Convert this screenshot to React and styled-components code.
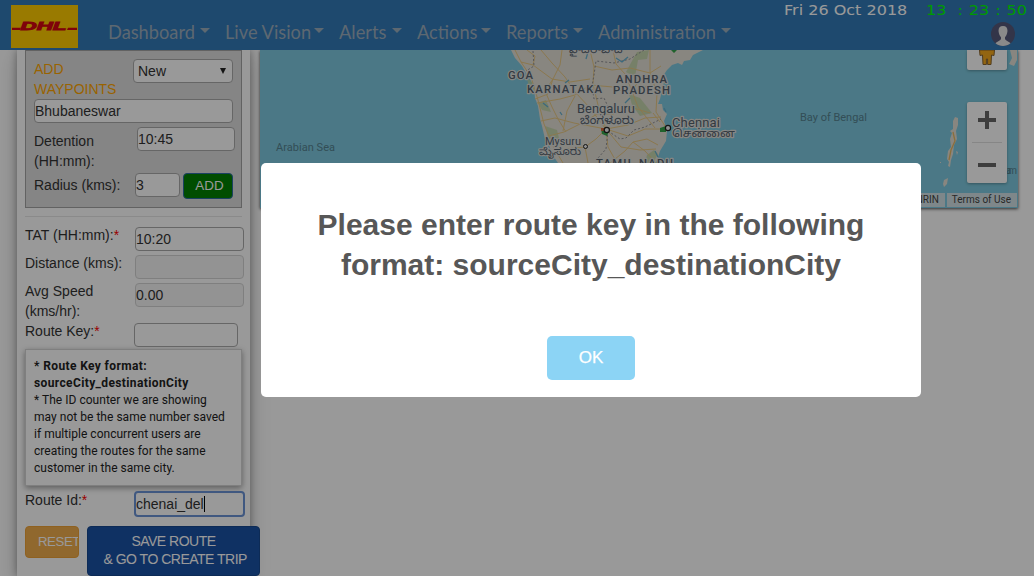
import React from "react";
import styled, { createGlobalStyle } from "styled-components";

const Global = createGlobalStyle`
  * { box-sizing: border-box; }
  html, body { margin: 0; height: 576px; overflow: hidden; background: #fff; }
  body { font: 14px/20px "Liberation Sans", Arial, sans-serif; color: #333; }
  input, select, button { font-family: inherit; }
`;

const Page = styled.div`
  width: 1034px;
  height: 576px;
  overflow: hidden;
  display: flex;
  flex-direction: column;
`;

const NavBar = styled.header`
  position: relative;
  z-index: 2;
  flex: 0 0 50px;
  background: #337ab7;
  display: flex;
  padding: 5px 7px 0 11px;
`;

const Logo = styled.svg`
  flex: none;
  width: 67px;
  height: 43px;
`;

const Menu = styled.nav`
  display: flex;
  gap: 15px;
  margin: 14px 0 0 30px;
`;

const MenuItem = styled.a`
  flex: none;
  display: flex;
  align-items: center;
  height: 26px;
  width: ${(p) => p.$width}px;
  font: 18.25px/26px Lato, sans-serif;
  color: #9badbd;
  white-space: nowrap;
  &::after {
    content: "";
    margin: -4px 0 0 auto;
    border: 5.5px solid transparent;
    border-top-color: currentColor;
    border-bottom: 0;
  }
`;

const Status = styled.div`
  margin-left: auto;
  display: flex;
  flex-direction: column;
  align-items: flex-end;
`;

const Clock = styled.div`
  display: flex;
  gap: 19px;
  margin-top: -3px;
  font: 14px/16px "DejaVu Sans", sans-serif;
  white-space: pre;
`;

const DateText = styled.span`
  width: 123px;
  color: #fff;
  transform: scaleX(1.145);
  transform-origin: left;
`;

const TimeText = styled.span`
  width: 88px;
  margin-right: 13px;
  display: flex;
  justify-content: space-between;
  color: #0f0;
  transform: scaleX(1.148);
  transform-origin: left;
`;

const Avatar = styled.svg`
  width: 24px;
  height: 24px;
  margin: 4px 12px 0 0;
`;

const Content = styled.main`
  flex: 1;
  display: flex;
  min-height: 0;
`;

const SidePanel = styled.section`
  flex: none;
  width: 233px;
  height: 526px;
  margin-left: 17px;
  padding: 0 6px 0 8px;
  box-shadow: 0 0 8px rgba(0, 0, 0, 0.35), 0 6px 20px rgba(0, 0, 0, 0.19);
`;

const Waypoints = styled.div`
  width: 217px;
  height: 158px;
  padding: 8px 0 0 8px;
  background: #dedede;
  border: 1px solid #a4a4a4;
`;

const FieldRow = styled.div`
  display: flex;
  align-items: flex-start;
  height: ${(p) => p.$height}px;
  padding-top: ${(p) => p.$top || 0}px;
`;

const Label = styled.label`
  flex: none;
  width: ${(p) => p.$width}px;
  padding-top: ${(p) => p.$top || 0}px;
  color: ${(p) => (p.$accent ? "#ffa500" : "#333")};
`;

const Required = styled.span`
  color: #f00;
`;

const Input = styled.input`
  flex: none;
  width: ${(p) => p.$width}px;
  height: 24px;
  margin-top: ${(p) => p.$top || 0}px;
  padding: 0 1px 0 0;
  border: 1px solid #aaa;
  border-radius: 4px;
  background: #fff;
  color: #333;
  font-size: 14px;
  &:disabled { background: #f5f5f5; border-color: #d4d4d4; color: #333; }
`;

const FocusedField = styled.div`
  flex: none;
  width: 111px;
  height: 26px;
  margin-top: 1px;
  padding: 1px 0;
  line-height: 23px;
  border: 2px solid #6b93d6;
  border-radius: 4px;
  display: flex;
  align-items: center;
`;

const Caret = styled.i`
  width: 1px;
  height: 16px;
  background: #000;
`;

const SelectBox = styled.div`
  width: 100px;
  height: 24px;
  padding: 0 6px 0 4px;
  display: flex;
  justify-content: space-between;
  align-items: center;
  border: 1px solid #aaa;
  border-radius: 4px;
  background: #fff;
  &::after {
    content: "";
    border: 3.5px solid transparent;
    border-top: 6px solid #222;
    border-bottom: 0;
  }
`;

const AddButton = styled.button`
  width: 50px;
  height: 26px;
  margin-left: 3px;
  padding: 0 0 2px 3px;
  border: 1px solid #2e6da4;
  border-radius: 4px;
  background: #008000;
  color: #fff;
  font-size: 13.4px;
`;

const Divider = styled.hr`
  width: 217px;
  margin: 8px 0;
  border: 0;
  border-top: 1px solid #e6e6e6;
`;

const HintCard = styled.div`
  width: 217px;
  height: 137px;
  padding: 8px;
  border: 1px solid #d4d4d4;
  box-shadow: 0 2px 6px rgba(0, 0, 0, 0.4);
  font: 12px/17px Roboto, sans-serif;
  letter-spacing: 0.03px;
  color: #222;
  white-space: nowrap;
  b { letter-spacing: 0.38px; }
`;

const Actions = styled.div`
  display: flex;
  align-items: flex-start;
  gap: 8px;
  width: 235px;
`;

const ResetButton = styled.button`
  width: 54px;
  height: 32px;
  padding: 0 0 2px 12px;
  border: 1px solid #eea236;
  border-radius: 4px;
  background: #f0ad4e;
  color: #fff;
  font-size: 13.2px;
  letter-spacing: -0.4px;
  text-align: left;
  overflow: hidden;
`;

const SaveButton = styled.button`
  position: relative;
  z-index: 1;
  width: 173px;
  height: 50px;
  padding: 0 0 2px;
  border: 1px solid #17498f;
  border-radius: 4px;
  background: #1a52a5;
  color: #fff;
  font-size: 14px;
  letter-spacing: -0.5px;
  line-height: 18px;
  white-space: pre;
`;

const MapFrame = styled.section`
  flex: none;
  position: relative;
  width: 758px;
  height: 158px;
  margin-left: 10px;
  background: #7dc9df;
  box-shadow: 0 1px 3px rgba(0, 0, 0, 0.7);
`;

const MapDrawing = styled.svg`
  display: block;
  width: 758px;
  height: 158px;
`;

const MapControls = styled.div`
  position: absolute;
  top: 0;
  right: 11px;
  width: 40px;
`;

const PegmanBox = styled.div`
  height: 20px;
  display: flex;
  justify-content: center;
  background: #fff;
  border-radius: 0 0 2px 2px;
  box-shadow: 0 1px 3px rgba(0, 0, 0, 0.3);
`;

const ZoomBox = styled.div`
  height: 81px;
  margin-top: 32px;
  background: #fff;
  border-radius: 2px;
  box-shadow: 0 1px 3px rgba(0, 0, 0, 0.3);
`;

const Legal = styled.div`
  position: absolute;
  right: 1px;
  bottom: 1px;
  display: flex;
  gap: 2px;
  font: 10px/14px Roboto, sans-serif;
  color: #444;
`;

const LegalItem = styled.span`
  padding: 0 6px 0 5px;
  white-space: nowrap;
  background: #d2e1e6;
`;

const Overlay = styled.div`
  position: fixed;
  z-index: 10;
  inset: 0;
  display: flex;
  align-items: flex-start;
  padding: 163px 0 0 261px;
  background: rgba(0, 0, 0, 0.4);
`;

const Dialog = styled.div`
  width: 660px;
  height: 234px;
  padding-top: 42px;
  display: flex;
  flex-direction: column;
  align-items: center;
  background: #fff;
  border-radius: 5px;
`;

const DialogTitle = styled.h2`
  margin: 0 0 51px;
  font-size: 30px;
  line-height: 40px;
  font-weight: 700;
  color: #575757;
  text-align: center;
`;

const OkButton = styled.button`
  width: 88px;
  height: 44px;
  border: 0;
  border-radius: 5px;
  background: #8cd4f5;
  color: #fff;
  font-size: 17px;
  padding: 0 0 1px;
  -webkit-text-stroke: 0.25px #fff;
`;

const menu = [
  ["Dashboard", 102],
  ["Live Vision", 99],
  ["Alerts", 63],
  ["Actions", 74],
  ["Reports", 77],
  ["Administration", 133],
];

const roads = [
  "M515 50 L521 62 L531 77 L538 100 L544 124 L554 148 L563 163",
  "M527 50 L535 56 L533 65 L521 62 M533 65 L552 79 L570 82 L590 79",
  "M541 50 L552 63 L565 77 L575 92 L590 108 L605 128",
  "M562 50 L560 65 L553 79 L548 94 L535 99",
  "M590 50 L594 67 L593 84 L598 105 L606 129 L608 147 L617 163",
  "M594 66 L612 70 L630 68 L650 73 L661 66",
  "M613 50 L616 64 L625 74 L632 91 L638 107 L655 128",
  "M650 50 L650 73 L657 93 L656 112 L667 129",
  "M537 103 L560 99 L575 95 L590 85 L613 87 L628 94 L648 86",
  "M541 121 L555 118 L574 123 L606 129 L628 125 L645 118 L661 117",
  "M545 137 L564 132 L584 122 L597 114 L613 114 L630 107 L650 113",
  "M555 155 L565 149 L585 147 L596 139 L606 129 L628 136 L645 129 L667 129",
  "M585 147 L588 163 M606 129 L621 147 L640 150 L656 149",
  "M610 163 L625 151 L633 142 L645 151 L656 163",
  "M658 145 L647 139 L633 142 M575 96 L567 111 L563 131",
  "M553 79 L545 91 L552 107 L558 119 L566 132",
  "M650 74 L638 82 L632 91 M653 113 L660 122",
];

function PlaceLabels() {
  const halo = {
    stroke: "#dfdfdb",
    strokeWidth: 2.4,
    strokeLinejoin: "round",
    paintOrder: "stroke",
    fill: "#56626d",
  };
  const indic = '"Noto Sans Kannada", "Noto Sans Tamil", "Noto Sans", sans-serif';
  return (
    <g fontFamily="Roboto, sans-serif" {...halo}>
      <g fontWeight="500" fontSize="11.3">
        <text x="508" y="79" textLength="25">GOA</text>
        <text x="527" y="93" textLength="75">KARNATAKA</text>
        <text x="616" y="83" textLength="51">ANDHRA</text>
        <text x="613" y="94" textLength="57">PRADESH</text>
        <text x="596" y="167" textLength="77">TAMIL NADU</text>
      </g>
      <text x="577" y="113" fontSize="13" textLength="58">Bengaluru</text>
      <text x="672" y="127" fontSize="13" textLength="48">Chennai</text>
      <text x="545" y="145" fontSize="11" textLength="36">Mysuru</text>
      <g fontFamily={indic}>
        <text x="580" y="124" fontSize="11" textLength="54" lengthAdjust="spacingAndGlyphs">ಬೆಂಗಳೂರು</text>
        <text x="672" y="137" fontSize="11" textLength="63" lengthAdjust="spacingAndGlyphs">சென்னை</text>
        <text x="539" y="155" fontSize="10" textLength="42" lengthAdjust="spacingAndGlyphs">ಮೈಸೂರು</text>
        <text x="569" y="53" fontSize="11" textLength="54" lengthAdjust="spacingAndGlyphs">హైదరాబాద్</text>
      </g>
    </g>
  );
}

function RegionMap() {
  return (
    <MapDrawing viewBox="260 50 758 158">
      <path
        fill="#e3dfd5"
        d="M511 50 L515 58 L522 66 L526 73 L531 81 L534 88 L535 98 L538 106 L540 119 L542 126 L545 139 L549 145 L552 154 L558 163 L560 208 L655 208 L656 163 L660 151 L666 141 L667 131 L664 121 L667 114 L663 110 L662 104 L658 104 L660 99 L662 91 L664 82 L663 76 L667 70 L672 65 L678 63 L682 65 L684 61 L690 60 L693 55 L703 50 Z"
      />
      <g fill="#bcd3a2" opacity=".75">
        <path d="M637 52 L649 50 L647 59 L638 60 L635 77 L626 72 L632 61Z" />
        <path d="M629 94 L640 98 L652 113 L640 116 L632 105Z" />
        <path d="M527 78 L534 84 L535 92 L529 88Z M538 103 L546 100 L551 112 L542 110Z M545 126 L557 130 L560 142 L549 141Z" />
        <path d="M647 155 L654 150 L658 154 L653 163 L645 163Z" />
      </g>
      <g fill="none" stroke="#e8c883" strokeWidth="1">
        {roads.map((d) => <path key={d} d={d} />)}
      </g>
      <g fill="none" stroke="#8f8f94" strokeWidth="1" strokeDasharray="2 2">
        <path d="M533 51 L534 66 L526 71 M644 50 L630 59 L614 63 L596 61 L594 75 L592 86 L594 99 L604 98 L611 113" />
        <path d="M608 131 L620 139 L626 138 L634 130 L645 127 L661 119 M608 131 L606 149 L598 158" />
      </g>
      <g fill="none" stroke="#66b0cf" strokeWidth="1.3">
        <path d="M616 58 L622 62 L628 57 M543 103 L548 107 M560 112 L562 115 M565 83 L569 80 M625 103 L630 98 M586 59 L588 52" />
        <path d="M664 108 L666 112 M655 151 L658 157" />
      </g>
      <path d="M671 50 L677 50 L674 53Z M660 128 L666 126 L666 132 L660 132Z M601 129 L610 129 L607 136 L602 134Z" fill="#36a34b" />
      <path d="M601 128h4v3h-4z" fill="#d9683a" />
      <PlaceLabels />
      <g fill="#eee" stroke="#222" strokeWidth="1.2">
        <circle cx="606.8" cy="130" r="2.6" />
        <circle cx="668" cy="128" r="2.6" />
        <circle cx="585.5" cy="146.5" r="2" strokeWidth="1" />
      </g>
      <g fontFamily="Roboto, sans-serif" fontSize="11" fill="#55828f">
        <text x="276" y="151" textLength="59">Arabian Sea</text>
        <text x="800" y="121" textLength="67">Bay of Bengal</text>
        <text x="1006" y="174" fontSize="10" textLength="11">am</text>
      </g>
      <g fill="#e3dfd5">
        <path d="M955 117 L958 118 L958 125 L956 131 L957 139 L954 145 L953 154 L951 160 L950 167 L948 166 L949 162 L947 159 L948 151 L951 147 L950 139 L952 133 L950 131 L953 129 L953 121Z" />
        <path d="M956 151 L958 152 L957 155Z M944 180 L948 178 L947 184 L944 187 L943 184Z M940 162h1v1h-1z" />
        <path d="M1010 50 L1017 50 L1017 60 L1014 66 L1009 64 L1012 58Z" />
      </g>
      <path d="M953 132 L955 141 L951 150 L949 160" fill="none" stroke="#e8b863" strokeWidth="1.3" />
    </MapDrawing>
  );
}

export default function App() {
  return (
    <Page>
      <Global />
      <NavBar>
        <Logo viewBox="0 0 67 43">
          <rect width="67" height="43" fill="#fc0" />
          <path d="M1 22.8h9l-1 2.2H1z M57 22.8h9v2.2H56z" fill="#d40511" />
          <text
            x="9.5"
            y="25"
            fontFamily="Liberation Sans, sans-serif"
            fontSize="11.5"
            fontWeight="700"
            fontStyle="italic"
            fill="#d40511"
            stroke="#d40511"
            strokeWidth=".9"
            textLength="46"
            lengthAdjust="spacingAndGlyphs"
          >DHL</text>
        </Logo>
        <Menu>
          {menu.map(([name, width]) => <MenuItem key={name} $width={width}>{name}</MenuItem>)}
        </Menu>
        <Status>
          <Clock>
            <DateText>Fri 26 Oct 2018</DateText>
            <TimeText><span>13</span><span> :</span><span>23</span><span>:</span><span>50</span></TimeText>
          </Clock>
          <Avatar viewBox="0 0 24 24">
            <circle cx="12" cy="12" r="12" fill="#56597a" />
            <path d="M12 4 C8.5 4 7.3 6.3 7.6 9.5 C7.8 12 9 14.3 10 15.3 V17 C9.5 18.8 6.5 19 4.5 21.3 C8.5 24.8 15.5 24.8 19.5 21.3 C17.5 19 14.5 18.8 14 17 V15.3 C15 14.3 16.2 12 16.4 9.5 C16.7 6.3 15.5 4 12 4Z" fill="#e6e6e6" />
          </Avatar>
        </Status>
      </NavBar>
      <Content>
        <SidePanel>
          <Waypoints>
            <FieldRow $height={40}>
              <Label $width={99} $accent>ADD WAYPOINTS</Label>
              <SelectBox>New</SelectBox>
            </FieldRow>
            <FieldRow $height={28}>
              <Input $width={199} defaultValue="Bhubaneswar" />
            </FieldRow>
            <FieldRow $height={46}>
              <Label $width={103} $top={4}>Detention<br />(HH:mm):</Label>
              <Input $width={98} defaultValue="10:45" />
            </FieldRow>
            <FieldRow $height={26}>
              <Label $width={101} $top={2}>Radius (kms):</Label>
              <Input $width={45} defaultValue="3" />
              <AddButton>ADD</AddButton>
            </FieldRow>
          </Waypoints>
          <Divider />
          <FieldRow $height={28}>
            <Label $width={110}>TAT (HH:mm):<Required>*</Required></Label>
            <Input $width={109} $top={2} defaultValue="10:20" />
          </FieldRow>
          <FieldRow $height={28}>
            <Label $width={110}>Distance (kms):</Label>
            <Input $width={109} $top={2} disabled />
          </FieldRow>
          <FieldRow $height={40}>
            <Label $width={110}>Avg Speed<br />(kms/hr):</Label>
            <Input $width={109} $top={2} disabled defaultValue="0.00" />
          </FieldRow>
          <FieldRow $height={28}>
            <Label $width={109}>Route Key:<Required>*</Required></Label>
            <Input $width={104} $top={2} />
          </FieldRow>
          <HintCard>
            <b>* Route Key format:<br />sourceCity_destinationCity</b><br />
            * The ID counter we are showing<br />
            may not be the same number saved<br />
            if multiple concurrent users are<br />
            creating the routes for the same<br />
            customer in the same city.
          </HintCard>
          <FieldRow $height={40} $top={4}>
            <Label $width={109}>Route Id:<Required>*</Required></Label>
            <FocusedField>chenai_del<Caret /></FocusedField>
          </FieldRow>
          <Actions>
            <ResetButton>RESET</ResetButton>
            <SaveButton>{"SAVE ROUTE\n & GO TO CREATE TRIP"}</SaveButton>
          </Actions>
        </SidePanel>
        <MapFrame>
          <RegionMap />
          <MapControls>
            <PegmanBox>
              <svg width="20" height="20" viewBox="0 0 20 20">
                <path d="M2.5 0 H17.5 L17 5.5 L14.5 5 L14 14.5 H10.6 V9 H9.4 V14.5 H6 L5.5 5 L3 5.5Z" fill="#f5a91d" stroke="#876533" strokeWidth="1" />
              </svg>
            </PegmanBox>
            <ZoomBox>
              <svg width="40" height="81" viewBox="0 0 40 81">
                <path d="M11 18h18M20 9v18M11 63h18" stroke="#666" strokeWidth="4" />
                <path d="M5 40.5h30" stroke="#e0e0e0" />
              </svg>
            </ZoomBox>
          </MapControls>
          <Legal>
            <LegalItem>Map data ©2018 Google, ZENRIN</LegalItem>
            <LegalItem>Terms of Use</LegalItem>
          </Legal>
        </MapFrame>
      </Content>
      <Overlay>
        <Dialog>
          <DialogTitle>Please enter route key in the following<br />format: sourceCity_destinationCity</DialogTitle>
          <OkButton>OK</OkButton>
        </Dialog>
      </Overlay>
    </Page>
  );
}
